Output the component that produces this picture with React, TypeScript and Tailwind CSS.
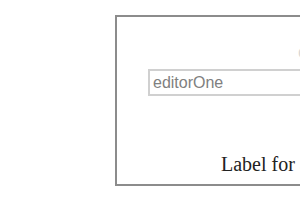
export default function App() {
  return (
    <div className="w-[300px] h-[210px] bg-white overflow-hidden">
      <div className="pt-[15px] pl-[115px]">
        <div className="w-[400px] h-[171px] border-2 border-[#8c8c8c] flex flex-col">
          <div className="h-[52px] relative">
            <span className="absolute left-[181px] top-[24px] text-[20px] leading-none text-[#d8d8d8] font-['Liberation_Serif',serif]">
              c
            </span>
          </div>
          <input
            readOnly
            placeholder="editorOne"
            className="ml-[31px] w-[340px] h-[27px] border-2 border-[#d0d0d0] px-[3px] text-[16px] text-[#808080] placeholder:text-[#808080] font-['Liberation_Sans',Arial,sans-serif] outline-none"
          />
          <div className="mt-[56px] pl-[104px] text-[20px] leading-[24px] text-[#222] font-['Liberation_Serif','Times_New_Roman',serif] whitespace-nowrap">
            Label for an editor
          </div>
        </div>
      </div>
    </div>
  );
}
